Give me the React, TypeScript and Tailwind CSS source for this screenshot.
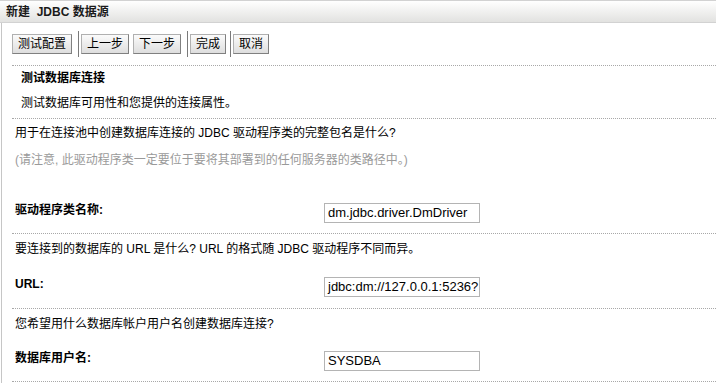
const cjk = "font-['Liberation_Sans','Noto_Sans_CJK_SC',sans-serif]";

function Btn({ label }: { label: string }) {
  return (
    <button
      className="h-[20px] px-[5px] text-[12px] leading-[18px] text-black border border-[#b0b0b0] border-r-[#808080] border-b-[#808080] bg-gradient-to-b from-[#fbfbfb] to-[#dedede]"
    >
      {label}
    </button>
  );
}

function Dotted() {
  return <div className="ml-[10px] border-t border-dotted border-[#a8a8a8]" />;
}

function FieldRow({
  label,
  value,
  top,
  height,
}: {
  label: string;
  value: string;
  top: string;
  height: string;
}) {
  return (
    <div className={`flex ${top} ${height}`}>
      <div className="w-[322px] pl-[13px] font-bold leading-[14px] text-black">
        {label}
      </div>
      <div className="w-[156px] h-[20px] border border-[#b4b4b4] bg-white pl-[3px] overflow-hidden whitespace-nowrap font-['Liberation_Sans',sans-serif] text-[13px] leading-[18px] text-black">
        {value}
      </div>
    </div>
  );
}

export default function App() {
  return (
    <div className={`w-[716px] h-[383px] overflow-hidden bg-white text-[12px] ${cjk}`}>
      <div className="h-[23px] border-t border-b border-[#d2d2d2] bg-gradient-to-b from-[#ffffff] to-[#e2e2e0] flex items-center pl-[6px] font-bold text-[#1a1a1a]">
        新建&nbsp; JDBC 数据源
      </div>

      <div className="ml-[1px] border-l border-[#c6c6c6] h-[360px]">
        {/* toolbar */}
        <div className="h-[42px] flex items-center pl-[10px]">
          <Btn label="测试配置" />
          <div className="ml-[6px] h-[26px] border-l border-[#7a7a7a] pl-[2px] flex items-center gap-[4px]">
            <Btn label="上一步" />
            <Btn label="下一步" />
          </div>
          <div className="ml-[6px] h-[26px] border-l border-[#7a7a7a] pl-[2px] flex items-center">
            <Btn label="完成" />
          </div>
          <div className="ml-[4px] h-[26px] border-l border-[#7a7a7a] pl-[2px] flex items-center">
            <Btn label="取消" />
          </div>
        </div>
        <Dotted />

        <div className="h-[52px] pl-[19px]">
          <div className="h-[24px] flex items-center font-bold text-black">测试数据库连接</div>
          <div className="h-[26px] flex items-center text-black">测试数据库可用性和您提供的连接属性。</div>
        </div>
        <Dotted />

        <div className="pl-[13px]">
          <div className="h-[28px] flex items-center text-black">
            用于在连接池中创建数据库连接的 JDBC 驱动程序类的完整包名是什么?
          </div>
          <div className="h-[26px] flex items-center text-[#9a9a9a]">
            (请注意, 此驱动程序类一定要位于要将其部署到的任何服务器的类路径中。)
          </div>
        </div>
        <FieldRow label="驱动程序类名称:" value="dm.jdbc.driver.DmDriver" top="pt-[30px]" height="h-[60px]" />
        <Dotted />

        <div className="pl-[13px] h-[30px] flex items-center text-black">
          要连接到的数据库的 URL 是什么? URL 的格式随 JDBC 驱动程序不同而异。
        </div>
        <FieldRow label="URL:" value="jdbc:dm://127.0.0.1:5236?" top="pt-[13px]" height="h-[44px]" />
        <Dotted />

        <div className="pl-[13px] h-[30px] flex items-center text-black">
          您希望用什么数据库帐户用户名创建数据库连接?
        </div>
        <FieldRow label="数据库用户名:" value="SYSDBA" top="pt-[12px]" height="h-[42px]" />
        <Dotted />
      </div>
    </div>
  );
}
